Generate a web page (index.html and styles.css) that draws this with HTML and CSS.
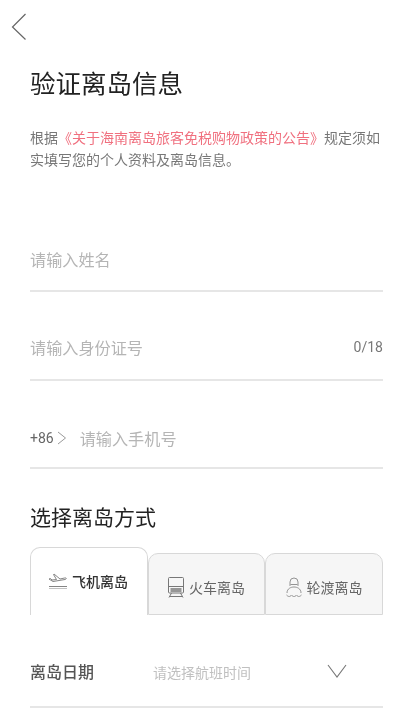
FILE: index.html
```html
<!DOCTYPE html>
<html lang="zh">
<head>
<meta charset="utf-8">
<title>验证离岛信息</title>
<link rel="stylesheet" href="styles.css">
</head>
<body>
<div class="page">
  <header class="topbar">
    <svg class="back" width="16" height="28" viewBox="0 0 16 28"><path d="M14.5 1 L1.5 14 L14.5 26.500" fill="none" stroke="#666" stroke-width="1.200"/></svg>
  </header>
  <h1 class="title">验证离岛信息</h1>
  <p class="desc"><span>根据</span><span class="link">《关于海南离岛旅客免税购物政策的公告》</span><span>规定须如</span><span>实填写您的个人资料及离岛信息。</span></p>
  <div class="field first"><span class="ph">请输入姓名</span></div>
  <div class="field idcard"><span class="ph">请输入身份证号</span><span class="count">0/18</span></div>
  <div class="field phone">
    <span class="code">+86</span>
    <svg class="code-arrow" width="10" height="14" viewBox="0 0 10 14"><path d="M1 1 L8.500 7 L1 13" fill="none" stroke="#999" stroke-width="1"/></svg>
    <span class="ph">请输入手机号</span>
  </div>
  <h2 class="section">选择离岛方式</h2>
  <div class="tabs">
    <div class="tab active">
      <svg class="icon" width="20" height="18" viewBox="0 0 20 18"><g fill="none" stroke="#777" stroke-width="0.900"><path d="M1 7 L5 9.500 L17 7.500 C19 7 18.500 5.500 16.500 6 L12 7 L6 2 L5.500 2.500 L8.500 7.500 L4 8 L2.500 6.500Z"/><path d="M1 14.500 H19"/><path d="M1 16.500 H19" stroke="#bbb"/></g></svg>
      <span>飞机离岛</span>
    </div>
    <div class="tab">
      <svg class="icon" width="16" height="21" viewBox="0 0 16 21"><g fill="none" stroke="#777" stroke-width="1"><rect x="0.500" y="0.500" width="15" height="15.500" rx="1"/><path d="M0.500 9.500 H15.500"/><path d="M2.500 12 H13.500 M2.500 14 H13.500" stroke-width="1.300"/><path d="M3.500 16 L1 20.500 M12.500 16 L15 20.500 M2 19.500 H14"/></g></svg>
      <span>火车离岛</span>
    </div>
    <div class="tab third">
      <svg class="icon" width="16" height="21" viewBox="0 0 16 21"><g fill="none" stroke="#888" stroke-width="0.900"><path d="M4 9 V5 A4 4 0 0 1 12 5 V9"/><path d="M4.500 7.500 H11.500"/><path d="M1 16 C1 11.500 5 10 8 10 C11 10 15 11.500 15 16"/><path d="M0.500 18 C2.500 20 4 20 5.500 18 C7 20 9 20 10.500 18 C12 20 13.500 20 15.500 18"/></g></svg>
      <span>轮渡离岛</span>
    </div>
  </div>
  <div class="date-row">
    <span class="date-label">离岛日期</span>
    <span class="date-ph">请选择航班时间</span>
    <svg class="chev" width="20" height="14" viewBox="0 0 20 14"><path d="M1 1 L10 13 L19 1" fill="none" stroke="#777" stroke-width="1.100"/></svg>
  </div>
</div>
</body>
</html>
```
FILE: styles.css
```css
html, body {
  margin: 0;
  padding: 0;
  background: #fff;
}
.page {
  width: 415px;
  height: 720px;
  overflow: hidden;
  box-sizing: border-box;
  padding: 0 32px 0 30px;
  font-family: "Noto Sans CJK SC", "Noto Sans", sans-serif;
  color: #333;
  text-spacing-trim: space-all;
  filter: blur(0.5px);
}
.topbar {
  height: 41px;
  padding-top: 13px;
  margin-left: -19px;
}
.back { display: block; }
.title {
  margin: 10px 0 0;
  font-size: 25.500px;
  font-weight: 400;
  line-height: 36px;
  color: #222;
}
.desc {
  margin: 26px 0 0;
  font-size: 14px;
  line-height: 22px;
  color: #777;
}
.link { color: #f0707f; }
.field {
  display: flex;
  align-items: flex-end;
  height: 88.500px;
  padding-bottom: 19px;
  box-sizing: border-box;
  border-bottom: 2px solid #e6e6e6;
}
.field.first { margin-top: 33px; height: 89px; }
.field.idcard { padding-bottom: 20px; }
.ph {
  font-size: 16.150px;
  color: #b5b5b5;
  line-height: 24px;
}
.count {
  margin-left: auto;
  font-size: 14px;
  line-height: 24px;
  color: #777;
  font-family: Roboto, sans-serif;
}
.field.phone { align-items: center; padding-top: 44px; padding-bottom: 16px; }
.code {
  font-size: 14px;
  color: #666;
  font-family: Roboto, sans-serif;
}
.code-arrow { margin: 0 13px 0 3px; }
.section {
  margin: 29px 0 0;
  font-size: 21px;
  line-height: 36px;
  font-weight: 400;
  color: #222;
}
.tabs {
  display: flex;
  align-items: flex-end;
  margin-top: 13px;
  height: 68px;
}
.tab {
  flex: 0 0 117px;
  height: 62px;
  box-sizing: border-box;
  display: flex;
  align-items: center;
  justify-content: center;
  gap: 5px;
  padding-top: 6px;
  font-size: 14px;
  color: #666;
  background: #f6f6f6;
  border: 1px solid #d8d8d8;
  border-radius: 10px 10px 0 0;
}
.tab.third { flex-basis: 118px; }
.tab.active {
  flex: 0 0 118px;
  height: 68px;
  background: #fff;
  border-bottom: 0;
  color: #333;
  font-weight: 500;
  padding-top: 0;
  padding-right: 2px;
  padding-bottom: 2px;
  gap: 4px;
}
.icon { flex: none; }
.date-row {
  display: flex;
  align-items: center;
  height: 93px;
  padding-top: 20px;
  box-sizing: border-box;
  border-bottom: 2px solid #e6e6e6;
}
.date-label {
  font-size: 16px;
  font-weight: 500;
  color: #555;
  width: 123px;
}
.date-ph {
  font-size: 14px;
  color: #c0c0c0;
  padding-top: 3px;
}
.chev { margin-left: 76px; padding-top: 1px; }
```
